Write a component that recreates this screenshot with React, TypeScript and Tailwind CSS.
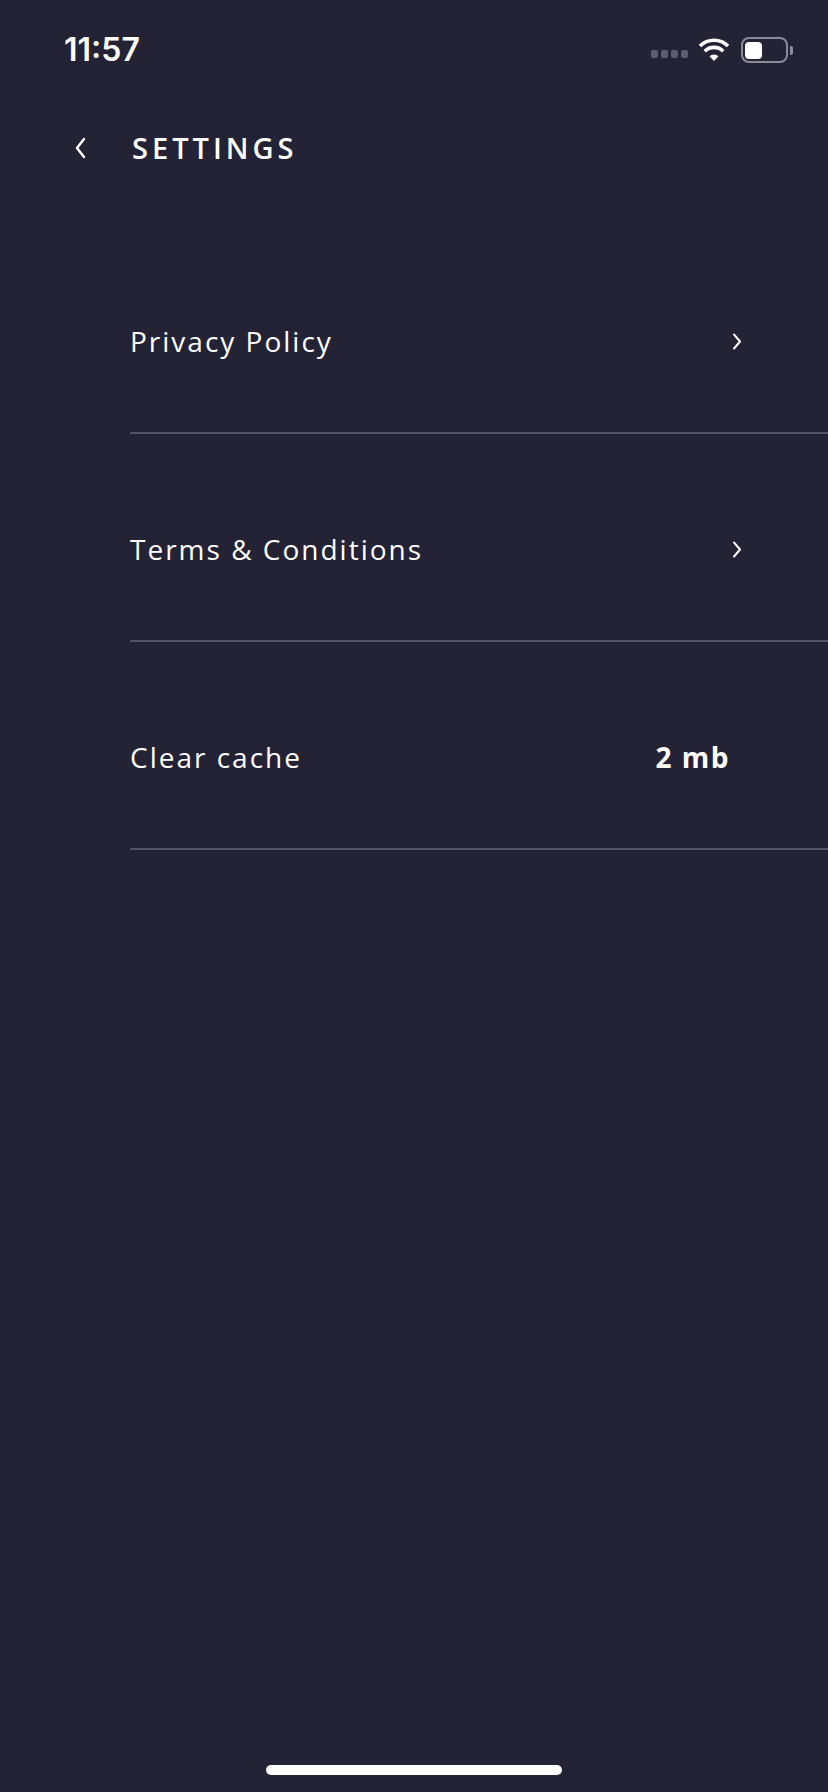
import { ReactNode } from 'react';

const rows: { label: string; value?: string }[] = [
	{ label: 'Privacy Policy' },
	{ label: 'Terms & Conditions' },
	{ label: 'Clear cache', value: '2 mb' },
];

const ChevronRight = () => (
	<svg width="10" height="17" viewBox="0 0 10 17" fill="none">
		<path
			d="M2 1.5 L8 8.5 L2 15.5"
			stroke="white"
			strokeWidth="2"
			strokeLinecap="round"
			strokeLinejoin="round"
		/>
	</svg>
);

const StatusBar = () => (
	<div className="flex h-[100px] items-center justify-between pl-[64px] pr-[35px]">
		<span className="font-['Inter',sans-serif] text-[32px] font-semibold tracking-[0px] text-white">
			11:57
		</span>
		<div className="flex items-center">
			<div className="mt-[8px] flex gap-[3px]">
				{[0, 1, 2, 3].map((i) => (
					<span key={i} className="h-[8px] w-[7px] rounded-[2px] bg-[#5e5c6c]" />
				))}
			</div>
			<svg className="ml-[10px]" width="32" height="24" viewBox="0 0 32 24">
				<path
					d="M16 23 L11.5 18.2 A6.5 6.5 0 0 1 20.5 18.2 Z"
					fill="white"
				/>
				<path
					d="M6.8 13.2 A13 13 0 0 1 25.2 13.2"
					stroke="white"
					strokeWidth="3.6"
					fill="none"
				/>
				<path
					d="M2 8 A20 20 0 0 1 30 8"
					stroke="white"
					strokeWidth="3.6"
					fill="none"
				/>
			</svg>
			<div className="ml-[11px] flex items-center">
				<div className="flex h-[26px] w-[47px] items-center rounded-[8px] border-2 border-[#8c8a98] p-[2px]">
					<div className="h-[17px] w-[17px] rounded-[4px] bg-white" />
				</div>
				<div className="ml-[2px] h-[9px] w-[3px] rounded-r-[2px] bg-[#8c8a98]" />
			</div>
		</div>
	</div>
);

const Row = ({ children }: { children: ReactNode }) => (
	<div className="ml-[130px] h-[208px] border-b-2 border-[#535166]">
		<div className="mt-[95px] flex h-[40px] items-center justify-between">
			{children}
		</div>
	</div>
);

export default function App() {
	return (
		<div className="flex min-h-[1792px] w-full flex-col bg-[#242235] font-['Open_Sans',sans-serif] text-white">
			<StatusBar />
			<div className="flex h-[96px] items-center pl-[73px]">
				<svg width="14" height="22" viewBox="0 0 14 22" fill="none">
					<path
						d="M11 2 L4 11 L11 20"
						stroke="white"
						strokeWidth="2.4"
						strokeLinecap="round"
						strokeLinejoin="round"
					/>
				</svg>
				<h1 className="ml-[45px] text-[29px] font-semibold tracking-[4px]">SETTINGS</h1>
			</div>
			<div className="mt-[30px] flex flex-col">
				{rows.map((row) => (
					<Row key={row.label}>
						<span className="text-[28px] font-normal tracking-[2px]">{row.label}</span>
						{row.value ? (
							<span className="mr-[98px] text-[28px] font-bold tracking-[1.5px]">
								{row.value}
							</span>
						) : (
							<span className="mr-[86px] flex">
								<ChevronRight />
							</span>
						)}
					</Row>
				))}
			</div>
			<div className="flex-1" />
			<div className="flex justify-center pb-[17px]">
				<div className="h-[10px] w-[296px] rounded-full bg-white" />
			</div>
		</div>
	);
}
